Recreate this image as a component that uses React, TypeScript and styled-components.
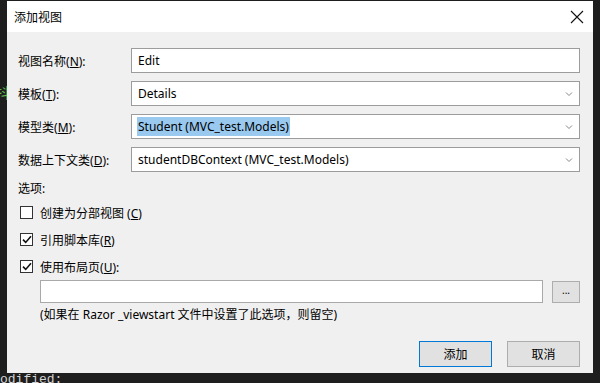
import React from "react";
import styled, { createGlobalStyle } from "styled-components";

const GlobalStyle = createGlobalStyle`
  html, body {
    margin: 0;
    padding: 0;
    background: #1e1e1e;
    overflow: hidden;
  }
`;

const uiFont = `"Noto Sans", "Noto Sans CJK SC", sans-serif`;

const Page = styled.div`
  width: 600px;
  height: 383px;
  display: grid;
  grid-template-columns: 7px 586px 7px;
  grid-template-rows: 1px 372px 10px;
  background: #1e1e1e;
  overflow: hidden;
`;

const Gutter = styled.div`
  grid-column: 1;
  grid-row: 2;
  overflow: hidden;
  padding-top: 83px;
  font-family: "Noto Sans CJK SC", sans-serif;
  font-size: 14px;
  line-height: 16px;
  color: #5cbf4a;
  white-space: nowrap;
`;

const GutterGlyph = styled.span`
  display: inline-block;
  margin-left: -4px;
`;

const Dialog = styled.div`
  grid-column: 2;
  grid-row: 2;
  display: flex;
  flex-direction: column;
  background: #f0f0f0;
  font-family: ${uiFont};
  font-size: 12px;
  color: #000;
  overflow: hidden;
`;

const TitleBar = styled.div`
  height: 31px;
  flex: none;
  background: #fff;
  display: flex;
  align-items: center;
  justify-content: space-between;
  padding: 0 9px 0 7px;
`;

const Title = styled.span`
  font-size: 12px;
`;

const Close = styled.svg`
  width: 14px;
  height: 14px;
`;

const Body = styled.div`
  padding: 16px 13px 0 11px;
  display: flex;
  flex-direction: column;
`;

const Form = styled.div`
  display: grid;
  grid-template-columns: 113px 1fr;
  row-gap: 8px;
  align-items: center;
`;

const Label = styled.span`
  padding-top: 1px;
`;

const Field = styled.div`
  height: 25px;
  box-sizing: border-box;
  border: 1px solid #9c9c9c;
  background: #fff;
  display: flex;
  align-items: center;
  padding: 0 6px 0 5px;
  white-space: nowrap;
`;

const Value = styled.span<{ $selected?: boolean }>`
  background: ${({ $selected }) => ($selected ? "#99c9ef" : "transparent")};
  padding: 1px 1px;
`;

const Spacer = styled.span`
  flex: 1;
`;

const Chevron = styled.svg`
  width: 8px;
  height: 6px;
`;

const Options = styled.div`
  margin-top: 8px;
  display: flex;
  flex-direction: column;
`;

const OptionsTitle = styled.div`
  height: 18px;
  line-height: 18px;
`;

const CheckRow = styled.label<{ $first?: boolean }>`
  display: flex;
  align-items: center;
  gap: 7px;
  height: 27px;
  padding-left: 2px;
  margin-top: ${({ $first }) => ($first ? "1px" : "0")};
`;

const Box = styled.span`
  width: 13px;
  height: 13px;
  box-sizing: border-box;
  border: 1px solid #333;
  background: #fff;
  display: flex;
  align-items: center;
  justify-content: center;
`;

const Indented = styled.div`
  padding-left: 22px;
  display: flex;
  flex-direction: column;
`;

const PathRow = styled.div`
  display: flex;
  align-items: center;
  gap: 9px;
`;

const PathInput = styled.div`
  flex: 1;
  height: 23px;
  box-sizing: border-box;
  border: 1px solid #a9a9a9;
  background: #fff;
`;

const Browse = styled.div`
  width: 28px;
  height: 22px;
  box-sizing: border-box;
  border: 1px solid #adadad;
  background: #e1e1e1;
  display: flex;
  align-items: center;
  justify-content: center;
  font-size: 10px;
  line-height: 10px;
  padding-bottom: 4px;
`;

const Note = styled.div`
  margin-top: 3px;
  height: 18px;
  line-height: 18px;
`;

const Footer = styled.div`
  display: flex;
  justify-content: flex-end;
  gap: 15px;
  margin-top: 17px;
`;

const Button = styled.div<{ $default?: boolean }>`
  width: 73px;
  height: 26px;
  box-sizing: border-box;
  border: 1px solid ${({ $default }) => ($default ? "#0078d7" : "#adadad")};
  background: #e1e1e1;
  display: flex;
  align-items: center;
  justify-content: center;
`;

const Console = styled.div`
  grid-column: 1 / 4;
  grid-row: 3;
  font-family: "Liberation Mono", monospace;
  font-size: 13px;
  line-height: 14px;
  color: #d4d4d4;
  white-space: nowrap;
`;

const Check = () => (
  <svg width="10" height="9" viewBox="0 0 10 9">
    <path d="M1 4.6 L3.7 7.4 L9 1.2" stroke="#111" strokeWidth="1.6" fill="none" />
  </svg>
);

const Arrow = () => (
  <Chevron viewBox="0 0 8 6">
    <path d="M1 1.5 L4 4.5 L7 1.5" stroke="#888" strokeWidth="1" fill="none" />
  </Chevron>
);

const Accel = ({ label, key_, suffix = ":" }: { label: string; key_: string; suffix?: string }) => (
  <>
    {label}(<u>{key_}</u>){suffix}
  </>
);

export default function App() {
  return (
    <>
      <GlobalStyle />
      <Page>
        <Gutter>
          <GutterGlyph>抖</GutterGlyph>
        </Gutter>
        <Dialog>
          <TitleBar>
            <Title>添加视图</Title>
            <Close viewBox="0 0 14 14">
              <path d="M1 1 L13 13 M13 1 L1 13" stroke="#111" strokeWidth="1.1" />
            </Close>
          </TitleBar>
          <Body>
            <Form>
              <Label>
                <Accel label="视图名称" key_="N" />
              </Label>
              <Field>
                <Value>Edit</Value>
              </Field>
              <Label>
                <Accel label="模板" key_="T" />
              </Label>
              <Field>
                <Value>Details</Value>
                <Spacer />
                <Arrow />
              </Field>
              <Label>
                <Accel label="模型类" key_="M" />
              </Label>
              <Field>
                <Value $selected>Student (MVC_test.Models)</Value>
                <Spacer />
                <Arrow />
              </Field>
              <Label>
                <Accel label="数据上下文类" key_="D" />
              </Label>
              <Field>
                <Value>studentDBContext (MVC_test.Models)</Value>
                <Spacer />
                <Arrow />
              </Field>
            </Form>
            <Options>
              <OptionsTitle>选项:</OptionsTitle>
              <CheckRow $first>
                <Box />
                <span>
                  创建为分部视图 (<u>C</u>)
                </span>
              </CheckRow>
              <CheckRow>
                <Box>
                  <Check />
                </Box>
                <span>
                  <Accel label="引用脚本库" key_="R" suffix="" />
                </span>
              </CheckRow>
              <CheckRow>
                <Box>
                  <Check />
                </Box>
                <span>
                  <Accel label="使用布局页" key_="U" />
                </span>
              </CheckRow>
              <Indented>
                <PathRow>
                  <PathInput />
                  <Browse>...</Browse>
                </PathRow>
                <Note>(如果在 Razor _viewstart 文件中设置了此选项，则留空)</Note>
              </Indented>
            </Options>
            <Footer>
              <Button $default>添加</Button>
              <Button>取消</Button>
            </Footer>
          </Body>
        </Dialog>
        <Console>odified:</Console>
      </Page>
    </>
  );
}
